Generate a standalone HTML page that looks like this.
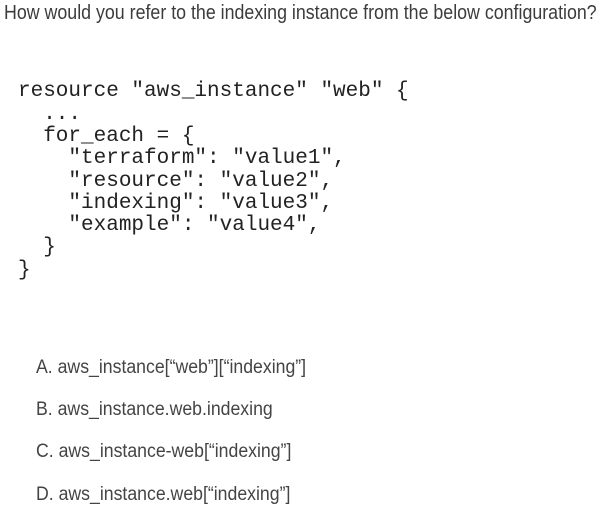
<!DOCTYPE html>
<html><head><style>
body{margin:0;width:608px;height:521px;background:#fff;overflow:hidden;position:relative;font-family:"Liberation Sans",sans-serif;color:#3c3c3c}
.t{position:absolute;white-space:pre;transform-origin:0 0}
.title{left:4px;top:2px;font-size:20px;transform:scaleX(0.89)}
.code{font-family:"Liberation Mono",monospace;font-size:21px;color:#222;position:absolute;white-space:pre;left:18px;line-height:22.3px}
.opt{left:36px;font-size:19px;transform:scaleX(0.93);color:#444}
</style></head><body>
<div class="t title">How would you refer to the indexing instance from the below configuration?</div>
<div class="code" style="top:81px">resource "aws_instance" "web" {</div>
<div class="code" style="top:104px">  ...</div>
<div class="code" style="top:126px">  for_each = {
    "terraform": "value1",
    "resource": "value2",
    "indexing": "value3",
    "example": "value4",
  }
}</div>
<div class="t opt" style="top:357px">A. aws_instance[“web”][“indexing”]</div>
<div class="t opt" style="top:399px">B. aws_instance.web.indexing</div>
<div class="t opt" style="top:441px">C. aws_instance-web[“indexing”]</div>
<div class="t opt" style="top:484px">D. aws_instance.web[“indexing”]</div>
</body></html>
